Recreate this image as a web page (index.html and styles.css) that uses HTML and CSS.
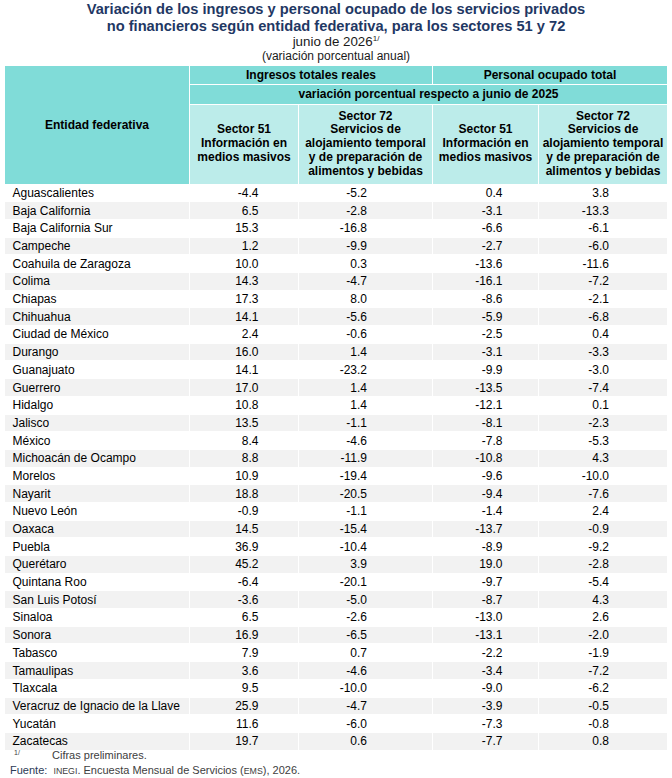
FILE: index.html
```html
<!DOCTYPE html>
<html lang="es">
<head>
<meta charset="utf-8">
<title>Variación de los ingresos y personal ocupado</title>
<link rel="stylesheet" href="styles.css">
</head>
<body>
<div class="page">
  <header class="head">
    <h1 class="title">Variación de los ingresos y personal ocupado de los servicios privados<br>no financieros según entidad federativa, para los sectores 51 y 72</h1>
    <p class="period">junio de 2026<sup class="sup">1/</sup></p>
    <p class="unit">(variación porcentual anual)</p>
  </header>
  <table class="data">
    <colgroup>
      <col class="c1"><col class="c2"><col class="c3"><col class="c4"><col class="c5">
    </colgroup>
    <thead>
      <tr class="hr1">
        <th class="dark ent" rowspan="3">Entidad federativa</th>
        <th class="dark" colspan="2">Ingresos totales reales</th>
        <th class="dark" colspan="2">Personal ocupado total</th>
      </tr>
      <tr class="hr2">
        <th class="dark" colspan="4">variación porcentual respecto a junio de 2025</th>
      </tr>
      <tr class="hr3">
        <th class="light">Sector 51<br>Información en<br>medios masivos</th>
        <th class="light">Sector 72<br>Servicios de<br>alojamiento temporal<br>y de preparación de<br>alimentos y bebidas</th>
        <th class="light">Sector 51<br>Información en<br>medios masivos</th>
        <th class="light">Sector 72<br>Servicios de<br>alojamiento temporal<br>y de preparación de<br>alimentos y bebidas</th>
      </tr>
    </thead>
    <tbody>
      <tr><td class="name">Aguascalientes</td><td class="n2">-4.4</td><td class="n3">-5.2</td><td class="n4">0.4</td><td class="n5">3.8</td></tr>
      <tr><td class="name">Baja California</td><td class="n2">6.5</td><td class="n3">-2.8</td><td class="n4">-3.1</td><td class="n5">-13.3</td></tr>
      <tr><td class="name">Baja California Sur</td><td class="n2">15.3</td><td class="n3">-16.8</td><td class="n4">-6.6</td><td class="n5">-6.1</td></tr>
      <tr><td class="name">Campeche</td><td class="n2">1.2</td><td class="n3">-9.9</td><td class="n4">-2.7</td><td class="n5">-6.0</td></tr>
      <tr><td class="name">Coahuila de Zaragoza</td><td class="n2">10.0</td><td class="n3">0.3</td><td class="n4">-13.6</td><td class="n5">-11.6</td></tr>
      <tr><td class="name">Colima</td><td class="n2">14.3</td><td class="n3">-4.7</td><td class="n4">-16.1</td><td class="n5">-7.2</td></tr>
      <tr><td class="name">Chiapas</td><td class="n2">17.3</td><td class="n3">8.0</td><td class="n4">-8.6</td><td class="n5">-2.1</td></tr>
      <tr><td class="name">Chihuahua</td><td class="n2">14.1</td><td class="n3">-5.6</td><td class="n4">-5.9</td><td class="n5">-6.8</td></tr>
      <tr><td class="name">Ciudad de México</td><td class="n2">2.4</td><td class="n3">-0.6</td><td class="n4">-2.5</td><td class="n5">0.4</td></tr>
      <tr><td class="name">Durango</td><td class="n2">16.0</td><td class="n3">1.4</td><td class="n4">-3.1</td><td class="n5">-3.3</td></tr>
      <tr><td class="name">Guanajuato</td><td class="n2">14.1</td><td class="n3">-23.2</td><td class="n4">-9.9</td><td class="n5">-3.0</td></tr>
      <tr><td class="name">Guerrero</td><td class="n2">17.0</td><td class="n3">1.4</td><td class="n4">-13.5</td><td class="n5">-7.4</td></tr>
      <tr><td class="name">Hidalgo</td><td class="n2">10.8</td><td class="n3">1.4</td><td class="n4">-12.1</td><td class="n5">0.1</td></tr>
      <tr><td class="name">Jalisco</td><td class="n2">13.5</td><td class="n3">-1.1</td><td class="n4">-8.1</td><td class="n5">-2.3</td></tr>
      <tr><td class="name">México</td><td class="n2">8.4</td><td class="n3">-4.6</td><td class="n4">-7.8</td><td class="n5">-5.3</td></tr>
      <tr><td class="name">Michoacán de Ocampo</td><td class="n2">8.8</td><td class="n3">-11.9</td><td class="n4">-10.8</td><td class="n5">4.3</td></tr>
      <tr><td class="name">Morelos</td><td class="n2">10.9</td><td class="n3">-19.4</td><td class="n4">-9.6</td><td class="n5">-10.0</td></tr>
      <tr><td class="name">Nayarit</td><td class="n2">18.8</td><td class="n3">-20.5</td><td class="n4">-9.4</td><td class="n5">-7.6</td></tr>
      <tr><td class="name">Nuevo León</td><td class="n2">-0.9</td><td class="n3">-1.1</td><td class="n4">-1.4</td><td class="n5">2.4</td></tr>
      <tr><td class="name">Oaxaca</td><td class="n2">14.5</td><td class="n3">-15.4</td><td class="n4">-13.7</td><td class="n5">-0.9</td></tr>
      <tr><td class="name">Puebla</td><td class="n2">36.9</td><td class="n3">-10.4</td><td class="n4">-8.9</td><td class="n5">-9.2</td></tr>
      <tr><td class="name">Querétaro</td><td class="n2">45.2</td><td class="n3">3.9</td><td class="n4">19.0</td><td class="n5">-2.8</td></tr>
      <tr><td class="name">Quintana Roo</td><td class="n2">-6.4</td><td class="n3">-20.1</td><td class="n4">-9.7</td><td class="n5">-5.4</td></tr>
      <tr><td class="name">San Luis Potosí</td><td class="n2">-3.6</td><td class="n3">-5.0</td><td class="n4">-8.7</td><td class="n5">4.3</td></tr>
      <tr><td class="name">Sinaloa</td><td class="n2">6.5</td><td class="n3">-2.6</td><td class="n4">-13.0</td><td class="n5">2.6</td></tr>
      <tr><td class="name">Sonora</td><td class="n2">16.9</td><td class="n3">-6.5</td><td class="n4">-13.1</td><td class="n5">-2.0</td></tr>
      <tr><td class="name">Tabasco</td><td class="n2">7.9</td><td class="n3">0.7</td><td class="n4">-2.2</td><td class="n5">-1.9</td></tr>
      <tr><td class="name">Tamaulipas</td><td class="n2">3.6</td><td class="n3">-4.6</td><td class="n4">-3.4</td><td class="n5">-7.2</td></tr>
      <tr><td class="name">Tlaxcala</td><td class="n2">9.5</td><td class="n3">-10.0</td><td class="n4">-9.0</td><td class="n5">-6.2</td></tr>
      <tr><td class="name">Veracruz de Ignacio de la Llave</td><td class="n2">25.9</td><td class="n3">-4.7</td><td class="n4">-3.9</td><td class="n5">-0.5</td></tr>
      <tr><td class="name">Yucatán</td><td class="n2">11.6</td><td class="n3">-6.0</td><td class="n4">-7.3</td><td class="n5">-0.8</td></tr>
      <tr><td class="name">Zacatecas</td><td class="n2">19.7</td><td class="n3">0.6</td><td class="n4">-7.7</td><td class="n5">0.8</td></tr>
    </tbody>
  </table>
  <footer class="notes">
    <p class="note"><span class="mark">1/</span><span class="note-text">Cifras preliminares.</span></p>
    <p class="source"><span class="src-label">Fuente:</span>&nbsp; <span class="sc">INEGI</span>. Encuesta Mensual de Servicios (<span class="sc">EMS</span>), 2026.</p>
  </footer>
</div>
</body>
</html>
```
FILE: styles.css
```css
html, body {
  margin: 0;
  padding: 0;
  background: #ffffff;
}
body {
  font-family: "Liberation Sans", Arial, sans-serif;
  color: #000000;
}
.page {
  width: 672px;
  padding-top: 1px;
}
.head {
  text-align: center;
}
.title {
  margin: 0;
  font-size: 14.67px;
  line-height: 17px;
  font-weight: bold;
  color: #1f3864;
}
.period {
  margin: 0;
  font-size: 13.33px;
  line-height: 14px;
  color: #1a1a1a;
}
.sup {
  font-size: 8px;
  vertical-align: 5px;
  line-height: 0;
}
.unit {
  margin: 0;
  font-size: 12px;
  line-height: 14px;
  color: #1a1a1a;
}
.data {
  margin: 2px 0 0 4px;
  border-collapse: separate;
  border-spacing: 1px;
  table-layout: fixed;
  width: 663px;
  font-size: 12px;
}
.c1 { width: 184px; }
.c2 { width: 108px; }
.c3 { width: 133px; }
.c4 { width: 105px; }
.c5 { width: 128px; }
th {
  font-weight: bold;
  text-align: center;
  vertical-align: middle;
  padding: 0;
  line-height: 14px;
  color: #000000;
}
.dark {
  background: #80dcd8;
}
.light {
  background: #bcecea;
  line-height: 13.8px;
}
.hr1 th, .hr2 th {
  height: 18.3px;
}
.hr3 th {
  height: 79px;
}
td {
  padding: 0;
  height: 16.7px;
  line-height: 14px;
  vertical-align: middle;
  white-space: nowrap;
}
tbody tr:nth-child(even) td {
  background: #f2f2f2;
}
.name {
  text-align: left;
  padding-left: 7.5px;
}
.n2, .n3, .n4, .n5 {
  text-align: right;
}
.n2 { padding-right: 39.5px; }
.n3 { padding-right: 65px; }
.n4 { padding-right: 35.5px; }
.n5 { padding-right: 58px; }
.notes {
  color: #404040;
  font-size: 11px;
  margin-top: -2px;
}
.note {
  margin: 0;
  display: flex;
  align-items: baseline;
  padding-left: 14px;
  line-height: 13px;
}
.mark {
  font-size: 7px;
  width: 38px;
  position: relative;
  top: -4px;
}
.source {
  margin: 0;
  padding-left: 10px;
  line-height: 15px;
}
.src-label {
  color: #2b3a55;
}
.sc {
  font-size: 8.8px;
}
```
